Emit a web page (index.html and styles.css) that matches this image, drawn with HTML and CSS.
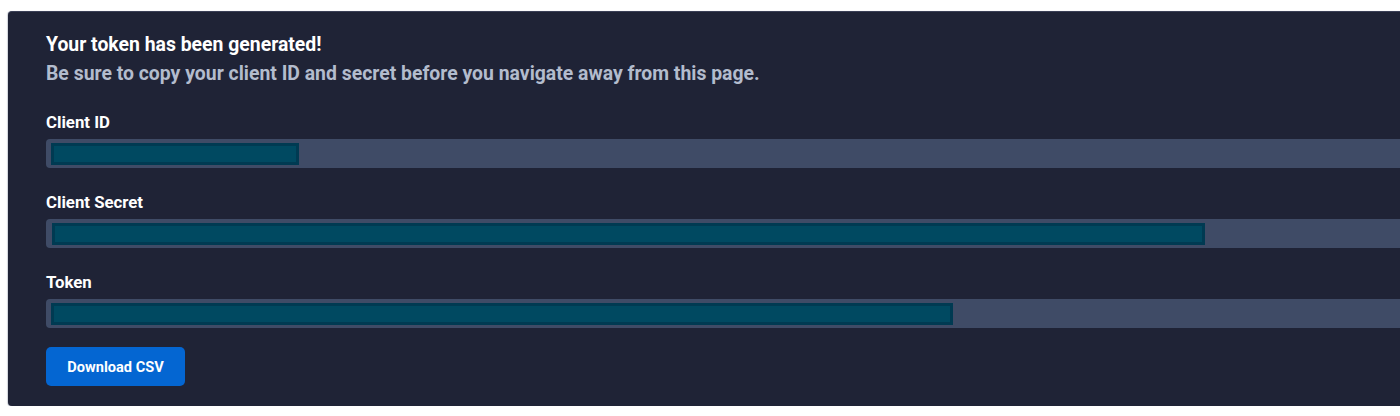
FILE: index.html
```html
<!DOCTYPE html>
<html lang="en">
<head>
<meta charset="utf-8">
<title>Token generated</title>
<link rel="stylesheet" href="styles.css">
</head>
<body>
<div class="page">
  <section class="card">
    <h2 class="title">Your token has been generated!</h2>
    <p class="subtitle">Be sure to copy your client ID and secret before you navigate away from this page.</p>

    <div class="field">
      <label class="label">Client ID</label>
      <div class="input"><span class="redact redact-id"></span></div>
    </div>

    <div class="field">
      <label class="label">Client Secret</label>
      <div class="input"><span class="redact redact-secret"></span></div>
    </div>

    <div class="field">
      <label class="label">Token</label>
      <div class="input"><span class="redact redact-token"></span></div>
    </div>

    <button class="btn" type="button">Download CSV</button>
  </section>
</div>
</body>
</html>
```

FILE: styles.css
```css
html, body {
  margin: 0;
  padding: 0;
  background: #ffffff;
  overflow: hidden;
}

body {
  font-family: Roboto, "Liberation Sans", Arial, sans-serif;
}

.page {
  padding: 11px 0 0 8px;
  width: 1500px;
}

.card {
  box-sizing: border-box;
  width: 1480px;
  background: #1f2336;
  border-top: 1px solid #3a3f56;
  border-radius: 4px;
  box-shadow: 0 1px 1px rgba(120, 130, 150, 0.45), -1px 0 1px rgba(120, 130, 150, 0.3);
  padding: 21px 38px 20px 38px;
  display: flex;
  flex-direction: column;
  align-items: flex-start;
}

.title {
  margin: 0;
  font-size: 19.4px;
  line-height: 24px;
  font-weight: 700;
  color: #ffffff;
}

.subtitle {
  margin: 5px 0 0 0;
  font-size: 19.4px;
  line-height: 24px;
  font-weight: 700;
  color: #b3bccd;
}

.field {
  align-self: stretch;
  display: flex;
  flex-direction: column;
  gap: 7px;
  margin-top: 26px;
}

.field + .field {
  margin-top: 24px;
}

.label {
  font-size: 16.8px;
  line-height: 20px;
  font-weight: 700;
  color: #ffffff;
}

.input {
  box-sizing: border-box;
  height: 29px;
  background: #3f4b66;
  border-radius: 4px 0 0 4px;
  display: flex;
  align-items: center;
  padding-left: 5px;
}

.redact {
  box-sizing: border-box;
  display: block;
  height: 22px;
  background: #004961;
  border: 3px solid #003a52;
}

.redact-id { width: 248px; }
.redact-secret { width: 1153px; margin-left: 1px; }
.redact-token { width: 902px; }

.btn {
  margin-top: 19px;
  width: 139px;
  height: 39px;
  border: none;
  border-radius: 5px;
  background: #0466d2;
  color: #ffffff;
  font-family: Roboto, "Liberation Sans", Arial, sans-serif;
  font-size: 14.6px;
  font-weight: 700;
  cursor: pointer;
}
```
